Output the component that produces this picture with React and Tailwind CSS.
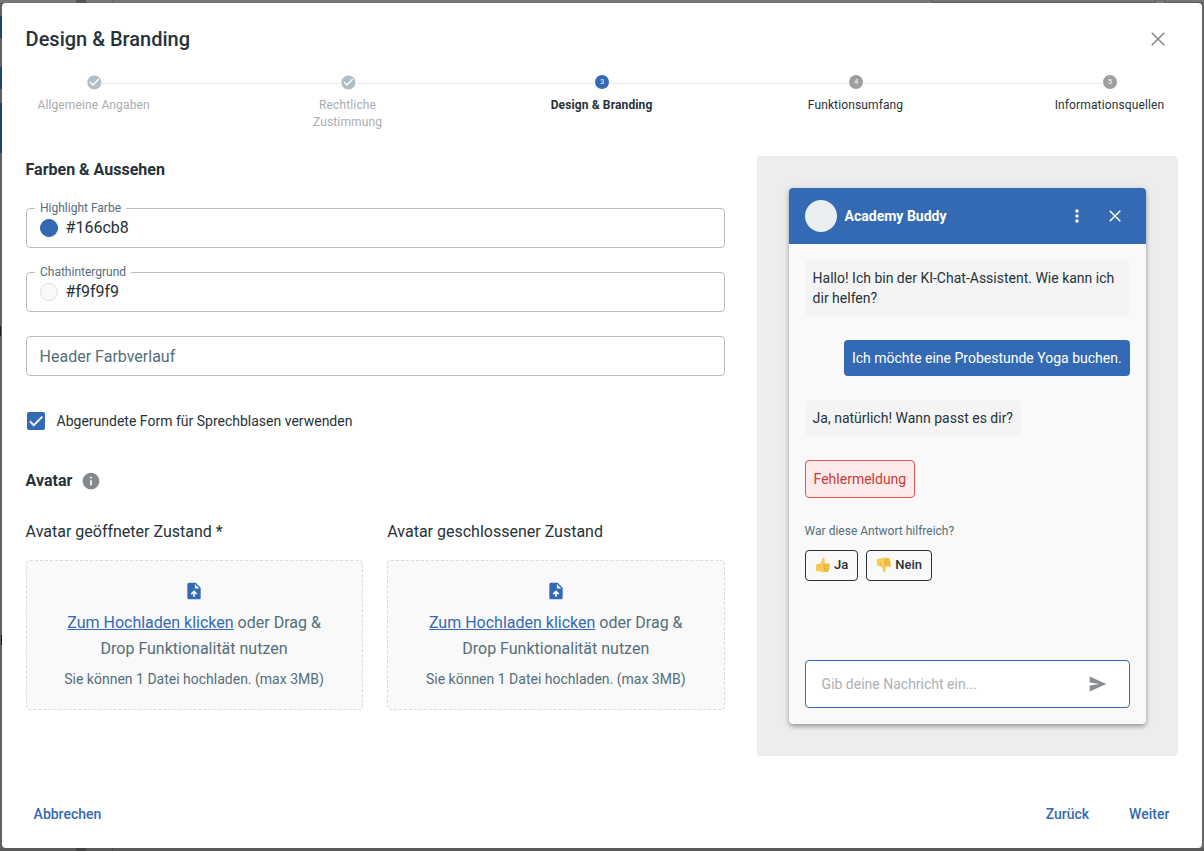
import React from "react";

const CHECK = "M9 16.17 4.83 12l-1.42 1.41L9 19 21 7l-1.41-1.41z";

const steps = [
  { label: "Allgemeine Angaben", state: "done" },
  { label: "Rechtliche Zustimmung", state: "done" },
  { label: "Design & Branding", state: "active" },
  { label: "Funktionsumfang", state: "open" },
  { label: "Informationsquellen", state: "open" },
];

function StepDot({ state, number }) {
  if (state === "done") {
    return (
      <svg viewBox="0 0 24 24" className="-mx-[1.4px] size-[16.8px] shrink-0 fill-[#b0bec5]">
        <path d="M12 2C6.48 2 2 6.48 2 12s4.48 10 10 10 10-4.48 10-10S17.52 2 12 2zm-2 15-5-5 1.41-1.41L10 14.17l7.59-7.59L19 8z" />
      </svg>
    );
  }
  return (
    <span
      className={`flex size-3.5 shrink-0 items-center justify-center rounded-full text-[7px] leading-none text-white ${
        state === "active" ? "bg-[#336ab3]" : "bg-[#9e9e9e]"
      }`}
    >
      {number}
    </span>
  );
}

function Stepper() {
  return (
    <div className="mt-[21px] h-[56px]">
      <div className="flex h-3.5 items-center pr-[61px] pl-[61.8px]">
        {steps.map((s, i) => (
          <React.Fragment key={s.label}>
            {i > 0 && <span className="mx-px mt-[3px] h-px flex-1 bg-[#e8e9ea]" />}
            <StepDot state={s.state} number={i + 1} />
          </React.Fragment>
        ))}
      </div>
      <div className="mt-[8px] mr-[0.5px] flex justify-between">
        {steps.map((s) => (
          <div
            key={s.label}
            className={`w-[136px] px-2 text-center text-[12px] leading-[17px] tracking-[0.13px] ${
              s.state === "done"
                ? "text-[#a9adaf]"
                : s.state === "active"
                  ? "font-bold text-[#263238]"
                  : "text-[#263238]"
            }`}
          >
            {s.label}
          </div>
        ))}
      </div>
    </div>
  );
}

function ColorField({ label, value, swatch }) {
  return (
    <div className="relative mb-6 flex h-10 items-center rounded-[4px] border border-[#bebebe] pl-[13px]">
      <span className="absolute -top-[8px] left-[8.4px] bg-white px-[5px] text-[12px] leading-[14px] text-[#546e7a]">
        {label}
      </span>
      <span className={`size-[18px] rounded-full border ${swatch}`} />
      <span className="ml-2 text-[16px] leading-5 text-[#263238]">{value}</span>
    </div>
  );
}

function UploadBox({ title }) {
  return (
    <div className="flex-1">
      <div className="text-[16px] leading-6 text-[#263238]">{title}</div>
      <div className="mt-4 flex h-[150px] flex-col items-center rounded-[4px] border border-dashed border-[#dcdcdc] bg-[#f9f9f9] pt-5">
        <svg viewBox="0 0 24 24" className="size-5 fill-[#336ab3]">
          <path
            fillRule="evenodd"
            d="M14 2H6c-1.1 0-1.99.9-1.99 2L4 20c0 1.1.89 2 1.99 2H18c1.1 0 2-.9 2-2V8l-6-6zm-1 7V3.5L18.5 9H13zM8 15.01l1.41 1.41L11 14.84V19h2v-4.16l1.59 1.59L16 15.01 12.01 11z"
          />
        </svg>
        <p className="mt-[9px] w-[300px] pr-[0.8px] text-center text-[16px] leading-[26px] text-[#546e7a]">
          <span className="text-[#336ab3] underline">Zum Hochladen klicken</span> oder Drag &amp;
          <br />
          Drop Funktionalität nutzen
        </p>
        <p className="mt-[7px] pr-[0.8px] text-[14px] leading-5 text-[#546e7a]">
          Sie können 1 Datei hochladen. (max 3MB)
        </p>
      </div>
    </div>
  );
}

function Thumb({ down }) {
  return (
    <svg viewBox="0 0 16 16" className={`size-4 ${down ? "-scale-y-100" : ""}`}>
      <path
        d="M.8 8.300Q.8 7.400 1.800 7.300L4.600 7Q6.700 5.500 6.900 2.500 6.900.8 8.200.8 9.700.9 9.800 3.200L9.500 6.300H14Q15.300 6.500 15.100 7.700 15 8.600 14.300 8.800 15.400 9.300 15 10.400 14.700 11.200 14 11.200 14.800 11.700 14.400 12.700 14 13.400 13.400 13.400 13.800 14.900 12.300 15.200H7.500Q5.800 15 4.800 14.300H1.800Q.9 14.200.9 13.300z"
        fill="#f9cd55"
      />
      <path
        d="M9.800 6.400Q8.700 7.500 9.200 8.700H14.300M9.300 8.700Q8.600 9.900 9.500 11.200H14M9.500 11.200Q8.900 12.400 9.800 13.400H13.400M4.700 7.100Q3.900 8 4.200 10"
        fill="none"
        stroke="#d99a32"
        strokeWidth=".75"
      />
    </svg>
  );
}

function AnswerButton({ down, children }) {
  return (
    <button className="flex h-[31px] items-center gap-[3px] rounded-[4px] border border-[#263238] pr-[9px] pl-[9px] pb-[2px] text-[13px] font-medium text-[#263238]">
      <Thumb down={down} />
      {children}
    </button>
  );
}

function ChatPreview() {
  return (
    <div className="flex h-[536px] flex-col overflow-hidden rounded-[4px] bg-[#f9f9f9] text-[14px] leading-5 text-[#263238] shadow-[0_3px_5px_-1px_rgba(0,0,0,0.2),0_2px_4px_rgba(0,0,0,0.14),0_1px_8px_rgba(0,0,0,0.12)]">
      <div className="flex h-14 items-center bg-[#336ab3] px-4 text-white">
        <span className="size-8 rounded-full bg-[#eceff1]" />
        <span className="ml-[7.6px] flex-1 font-bold">Academy Buddy</span>
        <svg viewBox="0 0 24 24" className="size-5 fill-white">
          <circle cx="12" cy="6" r="2" />
          <circle cx="12" cy="12" r="2" />
          <circle cx="12" cy="18" r="2" />
        </svg>
        <svg viewBox="0 0 20 20" className="mr-[5px] ml-[18px] size-5 fill-none stroke-white stroke-[1.5]">
          <path d="m4.700 4.700 10.600 10.600M15.300 4.700 4.700 15.300" />
        </svg>
      </div>
      <div className="flex flex-1 flex-col items-start p-4">
        <div className="w-full rounded-[4px] bg-[#f4f4f4] p-2 pl-[7.6px]">
          Hallo! Ich bin der KI-Chat-Assistent. Wie kann ich dir helfen?
        </div>
        <div className="mt-6 self-end rounded-[4px] bg-[#336ab3] py-2 pr-[8.4px] pl-[7.6px] whitespace-nowrap text-white">
          Ich möchte eine Probestunde Yoga buchen.
        </div>
        <div className="mt-6 rounded-[4px] bg-[#f4f4f4] p-2 pl-[7.6px]">Ja, natürlich! Wann passt es dir?</div>
        <div className="mt-6 rounded-[4px] border border-[#e05656] bg-[#fdebec] py-2 pr-2 pl-[7.6px] text-[#c73a3a]">
          Fehlermeldung
        </div>
        <div className="mt-6 -ml-[0.4px] text-[12px] leading-[18px] text-[#546e7a]">
          War diese Antwort hilfreich?
        </div>
        <div className="mt-[10px] flex gap-2">
          <AnswerButton>Ja</AnswerButton>
          <AnswerButton down>Nein</AnswerButton>
        </div>
        <div className="mt-auto flex h-12 w-full items-center justify-between rounded-[4px] border border-[#336ab3] bg-white pr-[21px] pl-[15.6px]">
          <span className="text-[#adb0b2]">Gib deine Nachricht ein...</span>
          <svg viewBox="0 0 24 24" className="size-5 fill-[#8b8e90]">
            <path d="M2 3v7.200L13.500 12 2 13.800V21l20-9z" />
          </svg>
        </div>
      </div>
    </div>
  );
}

export default function App() {
  return (
    <div className="flex h-[851px] w-[1204px] flex-col overflow-hidden bg-[#666] font-['Roboto',sans-serif]">
      <div className="flex h-[3px] shrink-0 bg-[#767676]">
        <span className="ml-[76px] w-[10px] bg-[#555]" />
        <span className="ml-[26px] w-px bg-[#666]" />
        <span className="ml-[818px] w-[225px] rounded-b-[3px] border border-t-0 border-[#5c5c5c]" />
        <span className="ml-[8px] w-[40px] rounded-bl-[3px] border-b border-l border-[#5c5c5c]" />
      </div>
      <div className="flex h-[845px]">
        <div className="flex w-[2px] shrink-0 flex-col bg-[#606060]">
          <span className="mt-[13px] h-[22px] bg-[#1c4763]" />
          <span className="mt-[29px] h-[22px] bg-[#1c4763]" />
          <span className="mt-[14px] h-[50px] bg-[#1c4763]" />
          <span className="mt-[173px] h-[10px] w-px bg-[#222]" />
          <span className="mt-[299px] h-[10px] w-px self-end bg-[#111]" />
        </div>
        <main className="flex w-[1200px] shrink-0 flex-col rounded-[4px] bg-white pr-6 pl-[23.6px]">
          <header className="flex h-[51px] items-start justify-between pt-6">
            <h1 className="text-[20px] leading-6 font-medium text-[#263238]">
              Design &amp; Branding
            </h1>
            <svg viewBox="0 0 20 20" className="mt-[2px] mr-[10px] size-5 fill-none stroke-[#868a8c] stroke-[1.6]">
              <path d="m3.700 3.700 12.600 12.600M16.300 3.700 3.700 16.300" />
            </svg>
          </header>
          <Stepper />
          <div className="mt-[25px] flex h-[600px] justify-between">
            <section className="w-[699.4px]">
              <h2 className="pt-px text-[16px] leading-[26px] font-bold text-[#263238]">
                Farben &amp; Aussehen
              </h2>
              <div className="pt-[25px]">
                <ColorField label="Highlight Farbe" value="#166cb8" swatch="border-[#2d61a8] bg-[#336ab3]" />
                <ColorField label="Chathintergrund" value="#f9f9f9" swatch="border-[#e0e0e0] bg-[#f9f9f9]" />
                <div className="flex h-10 items-center rounded-[4px] border border-[#bebebe] px-[13px] pt-[2px] text-[16px] text-[#546e7a]">
                  Header Farbverlauf
                </div>
              </div>
              <div className="mt-[35px] flex h-5 items-center">
                <span className="ml-[1.4px] flex size-[18px] items-center justify-center rounded-[2px] bg-[#336ab3]">
                  <svg viewBox="0 0 24 24" className="size-[18px] fill-white stroke-white stroke-[.8]">
                    <path d={CHECK} />
                  </svg>
                </span>
                <span className="ml-[11.6px] text-[14px] text-[#263238]">
                  Abgerundete Form für Sprechblasen verwenden
                </span>
              </div>
              <div className="mt-[37px] flex h-[26px] items-center">
                <h2 className="text-[16px] font-bold text-[#263238]">Avatar</h2>
                <svg viewBox="0 0 24 24" className="ml-[9px] size-5 fill-[#86898b]">
                  <path d="M12 2C6.480 2 2 6.480 2 12s4.480 10 10 10 10-4.480 10-10S17.520 2 12 2zm1 15h-2v-6h2v6zm0-8h-2V7h2v2z" />
                </svg>
              </div>
              <div className="mt-[26px] flex gap-6">
                <UploadBox title="Avatar geöffneter Zustand *" />
                <UploadBox title="Avatar geschlossener Zustand" />
              </div>
            </section>
            <aside className="w-[421px] rounded-[4px] bg-[#ededed] p-8">
              <ChatPreview />
            </aside>
          </div>
          <footer className="mt-[46px] flex h-6 items-center pr-[8.6px] pl-2 text-[14px] font-medium text-[#336ab3]">
            <button>Abbrechen</button>
            <button className="ml-auto">Zurück</button>
            <button className="ml-10">Weiter</button>
          </footer>
        </main>
        <div className="w-[2px] shrink-0 bg-[#666]" />
      </div>
      <div className="flex h-[3px] shrink-0 bg-[#5a5a5a]">
        <span className="ml-[76px] w-[10px] bg-[#434343]" />
        <span className="ml-[26px] w-px bg-[#4c4c4c]" />
      </div>
    </div>
  );
}
